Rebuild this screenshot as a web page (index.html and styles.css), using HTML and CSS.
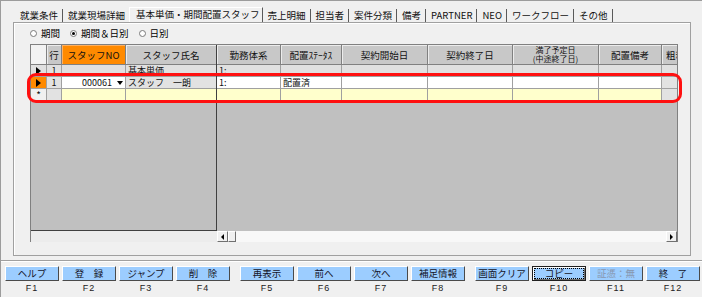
FILE: index.html
```html
<!DOCTYPE html>
<html lang="ja">
<head>
<meta charset="utf-8">
<title>基本単価・期間配置スタッフ</title>
<link rel="stylesheet" href="styles.css">
</head>
<body>
<div class="screen">
  <div class="tabs">
    <span class="tab">就業条件</span>
    <span class="tab">就業現場詳細</span>
    <span class="tab active">基本単価・期間配置スタッフ</span>
    <span class="tab">売上明細</span>
    <span class="tab">担当者</span>
    <span class="tab">案件分類</span>
    <span class="tab">備考</span>
    <span class="tab">PARTNER</span>
    <span class="tab">NEO</span>
    <span class="tab">ワークフロー</span>
    <span class="tab">その他</span>
  </div>

  <div class="panel">
    <div class="radios">
      <span class="radio"><span class="radio-dot"></span>期間</span>
      <span class="radio"><span class="radio-dot checked"></span>期間＆日別</span>
      <span class="radio"><span class="radio-dot"></span>日別</span>
    </div>

    <div class="grid">
      <div class="grid-body">
        <div class="pane pane-left">
          <div class="row head">
            <div class="cell c-ind corner"></div>
            <div class="cell c-line hcell">行</div>
            <div class="cell c-no hcell orange">スタッフNO</div>
            <div class="cell c-name hcell last">スタッフ氏名</div>
          </div>
          <div class="row r-fixed">
            <div class="cell c-ind ind"><span class="tri"></span></div>
            <div class="cell c-line center">1</div>
            <div class="cell c-no"></div>
            <div class="cell c-name last">基本単価</div>
          </div>
          <div class="row">
            <div class="cell c-ind ind"><span class="tri"></span></div>
            <div class="cell c-line center gray">1</div>
            <div class="cell c-no white no-cell"><span class="no-text">000061</span><span class="dd"><span class="dd-tri"></span></span></div>
            <div class="cell c-name gray last">スタッフ　一朗</div>
          </div>
          <div class="row">
            <div class="cell c-ind newrow">*</div>
            <div class="cell c-line gray"></div>
            <div class="cell c-no yellow"></div>
            <div class="cell c-name yellow last"></div>
          </div>
          <div class="filler"></div>
        </div>

        <div class="pane pane-right">
          <div class="row head">
            <div class="cell c-kinmu hcell">勤務体系</div>
            <div class="cell c-status hcell">配置ｽﾃｰﾀｽ</div>
            <div class="cell c-date hcell">契約開始日</div>
            <div class="cell c-date2 hcell">契約終了日</div>
            <div class="cell c-date hcell two"><span>満了予定日</span><span>(中途終了日)</span></div>
            <div class="cell c-memo hcell">配置備考</div>
            <div class="cell c-rest hcell left">粗利</div>
          </div>
          <div class="row r-fixed">
            <div class="cell c-kinmu">1:</div>
            <div class="cell c-status"></div>
            <div class="cell c-date"></div>
            <div class="cell c-date2"></div>
            <div class="cell c-date"></div>
            <div class="cell c-memo"></div>
            <div class="cell c-rest"></div>
          </div>
          <div class="row">
            <div class="cell c-kinmu white">1:</div>
            <div class="cell c-status white">配置済</div>
            <div class="cell c-date white"></div>
            <div class="cell c-date2 white"></div>
            <div class="cell c-date white"></div>
            <div class="cell c-memo white"></div>
            <div class="cell c-rest gray"></div>
          </div>
          <div class="row">
            <div class="cell c-kinmu yellow"></div>
            <div class="cell c-status yellow"></div>
            <div class="cell c-date yellow"></div>
            <div class="cell c-date2 yellow"></div>
            <div class="cell c-date yellow"></div>
            <div class="cell c-memo yellow"></div>
            <div class="cell c-rest gray"></div>
          </div>
          <div class="filler"></div>
        </div>
      </div>

      <div class="grid-foot">
        <div class="foot-left"></div>
        <div class="hscroll">
          <span class="sb-btn"><span class="arr-left"></span></span>
          <span class="sb-thumb"></span>
          <span class="sb-track"></span>
          <span class="sb-btn"><span class="arr-right"></span></span>
        </div>
      </div>

      <div class="highlight"></div>
    </div>
  </div>

  <div class="footer">
    <div class="group">
      <div class="key"><div class="btn">ヘルプ</div><div class="fkey">F1</div></div>
      <div class="key"><div class="btn">登　録</div><div class="fkey">F2</div></div>
      <div class="key"><div class="btn">ジャンプ</div><div class="fkey">F3</div></div>
      <div class="key"><div class="btn">削　除</div><div class="fkey">F4</div></div>
    </div>
    <div class="group">
      <div class="key"><div class="btn">再表示</div><div class="fkey">F5</div></div>
      <div class="key"><div class="btn">前へ</div><div class="fkey">F6</div></div>
      <div class="key"><div class="btn">次へ</div><div class="fkey">F7</div></div>
      <div class="key"><div class="btn">補足情報</div><div class="fkey">F8</div></div>
    </div>
    <div class="group">
      <div class="key"><div class="btn">画面クリア</div><div class="fkey">F9</div></div>
      <div class="key"><div class="btn focus"><span class="ring">コピー</span></div><div class="fkey">F10</div></div>
      <div class="key"><div class="btn disabled">証憑：無</div><div class="fkey">F11</div></div>
      <div class="key"><div class="btn">終　了</div><div class="fkey">F12</div></div>
    </div>
  </div>
</div>
</body>
</html>
```

FILE: styles.css
```css
* { box-sizing: border-box; }
html, body { margin: 0; padding: 0; }
body {
  width: 702px;
  height: 297px;
  overflow: hidden;
  background: #f0f0f0;
  font-family: "Noto Sans CJK JP", "Noto Sans", sans-serif;
  color: #000;
}
.screen {
  width: 702px;
  height: 297px;
  border-top: 1px solid #9c9c9c;
  border-left: 1px solid #9c9c9c;
  display: flex;
  flex-direction: column;
}

/* tabs */
.tabs {
  display: flex;
  align-items: flex-end;
  height: 21px;
  padding-left: 14px;
  font-size: 9.5px;
  flex: none;
}
.tab {
  height: 13px;
  line-height: 13px;
  padding: 0 4px 0 5px;
  border-right: 1px solid #5a5a5a;
  white-space: nowrap;
  color: #111;
}
.tab.active {
  height: 15px;
  line-height: 12px;
  margin-left: -1px;
  padding: 0 2px 0 6px;
  border-left: 1px solid #fff;
  border-top: 1px solid #fff;
  background: #f0f0f0;
}

/* panel */
.panel {
  flex: none;
  margin-left: 12px;
  width: 678px;
  height: 234px;
  border: 1px solid #a0a0a0;
  box-shadow: inset 1px 1px 0 #fff;
  padding: 5px 0 0 16px;
}
.radios {
  display: flex;
  align-items: center;
  height: 11px;
  font-size: 9.5px;
  line-height: 11px;
}
.radio {
  display: flex;
  align-items: center;
  margin-right: 10px;
}
.radio-dot {
  width: 7px;
  height: 7px;
  border-radius: 50%;
  border: 1px solid #7a7a7a;
  background: #fff;
  margin-right: 4px;
  display: flex;
  align-items: center;
  justify-content: center;
}
.radio-dot.checked::after {
  content: "";
  width: 3px;
  height: 3px;
  border-radius: 50%;
  background: #000;
}

/* grid */
.grid {
  position: relative;
  margin-top: 5px;
  width: 648px;
  border: 1px solid #808080;
  border-bottom: none;
}
.grid-body {
  display: flex;
  height: 186px;
}
.pane {
  display: flex;
  flex-direction: column;
  background: #c0c0c0;
  overflow: hidden;
}
.pane-left {
  width: 186px;
  border-right: 1px solid #404040;
  border-bottom: 1px solid #404040;
}
.pane-right { width: 460px; }
.row {
  display: flex;
  flex: none;
  height: 12px;
}
.row.head { height: 20px; }
.r-fixed .cell { background: #e0e0e0; }
.cell {
  flex: none;
  height: 100%;
  border-right: 1px solid #a0a0a0;
  border-bottom: 1px solid #a0a0a0;
  font-size: 9px;
  line-height: 11px;
  padding-left: 2px;
  white-space: nowrap;
  overflow: hidden;
  color: #111;
}
.cell.last { border-right: none; }
.c-ind { width: 16px; padding: 0; }
.c-line { width: 15px; }
.c-no { width: 64px; }
.c-name { width: 90px; }
.c-kinmu { width: 64px; }
.c-status { width: 61px; }
.c-date { width: 86px; }
.c-date2 { width: 85px; }
.c-memo { width: 63px; }
.c-rest { width: 15px; border-right: none; }

.hcell {
  background: #c8c8c8;
  border-color: #808080;
  box-shadow: inset 1px 1px 0 #ececec;
  display: flex;
  align-items: center;
  justify-content: center;
  padding: 0;
  font-size: 9.5px;
  line-height: 12px;
  text-align: center;
}
.hcell.orange { background: #ff8a00; box-shadow: inset 1px 1px 0 #ffb060; }
.hcell.left { justify-content: flex-start; padding-left: 4px; }
.hcell.two {
  flex-direction: column;
  justify-content: flex-start;
  font-size: 8px;
  line-height: 9px;
}
.corner {
  background: #f2f2f2;
  border-color: #808080;
}
.center { text-align: center; padding: 0; }
.gray { background: #e2e2e2; }
.white { background: #fff; }
.yellow { background: #ffffcc; }
.ind {
  background: #ff8a00;
  display: flex;
  align-items: center;
  justify-content: center;
}
.tri {
  width: 0;
  height: 0;
  border-left: 5px solid #000;
  border-top: 4px solid transparent;
  border-bottom: 4px solid transparent;
}
.newrow {
  background: #f0f0f0;
  text-align: center;
  font-size: 10px;
  line-height: 12px;
}
.no-cell {
  display: flex;
  padding: 0;
}
.no-text {
  flex: 1;
  text-align: right;
  padding-right: 3px;
}
.dd {
  width: 10px;
  height: 11px;
  background: #fff;
  display: flex;
  align-items: center;
  justify-content: center;
}
.dd-tri {
  width: 0;
  height: 0;
  border-top: 4px solid #000;
  border-left: 3px solid transparent;
  border-right: 3px solid transparent;
}
.filler { flex: 1; }

.grid-foot {
  display: flex;
  height: 11px;
}
.foot-left {
  width: 186px;
  background: #ececec;
}
.hscroll {
  width: 460px;
  display: flex;
  background: #f8f8f8;
}
.sb-btn, .sb-thumb {
  flex: none;
  height: 11px;
  background: #f0f0f0;
  border: 1px solid;
  border-color: #fff #707070 #707070 #fff;
  display: flex;
  align-items: center;
  justify-content: center;
}
.sb-btn { width: 11px; }
.sb-thumb { width: 8px; }
.sb-track { flex: 1; }
.arr-left {
  width: 0; height: 0;
  border-right: 3px solid #000;
  border-top: 3px solid transparent;
  border-bottom: 3px solid transparent;
}
.arr-right {
  width: 0; height: 0;
  border-left: 3px solid #000;
  border-top: 3px solid transparent;
  border-bottom: 3px solid transparent;
}

.highlight {
  position: absolute;
  left: -4px;
  top: 28px;
  width: 655px;
  height: 30px;
  border: 3px solid #ff1010;
  border-radius: 9px;
  pointer-events: none;
}

/* footer */
.footer {
  flex: 1;
  margin-top: 4px;
  border-top: 1px solid #a0a0a0;
  box-shadow: inset 0 1px 0 #fff;
  display: flex;
  gap: 10px;
  padding: 5px 0 0 4px;
}
.group {
  display: flex;
  gap: 3px;
}
.key {
  width: 54px;
  display: flex;
  flex-direction: column;
  align-items: center;
}
.btn {
  width: 54px;
  height: 15px;
  background: #9ccdff;
  border: 1px solid;
  border-color: #ffffff #4a4a4a #4a4a4a #ffffff;
  font-size: 9.5px;
  line-height: 13px;
  text-align: center;
  color: #141428;
  white-space: nowrap;
}
.btn.disabled { color: #8797b0; }
.btn.focus {
  border-color: #202020;
  box-shadow: inset 1px 1px 0 #fff, inset -1px -1px 0 #707070;
  display: flex;
  padding: 1px;
}
.ring {
  flex: 1;
  border: 1px dotted #000;
  line-height: 9px;
}
.fkey {
  margin-top: 2px;
  font-family: "Liberation Sans", Arial, sans-serif;
  font-size: 9px;
  line-height: 11px;
  letter-spacing: 1px;
  color: #222;
}
```
